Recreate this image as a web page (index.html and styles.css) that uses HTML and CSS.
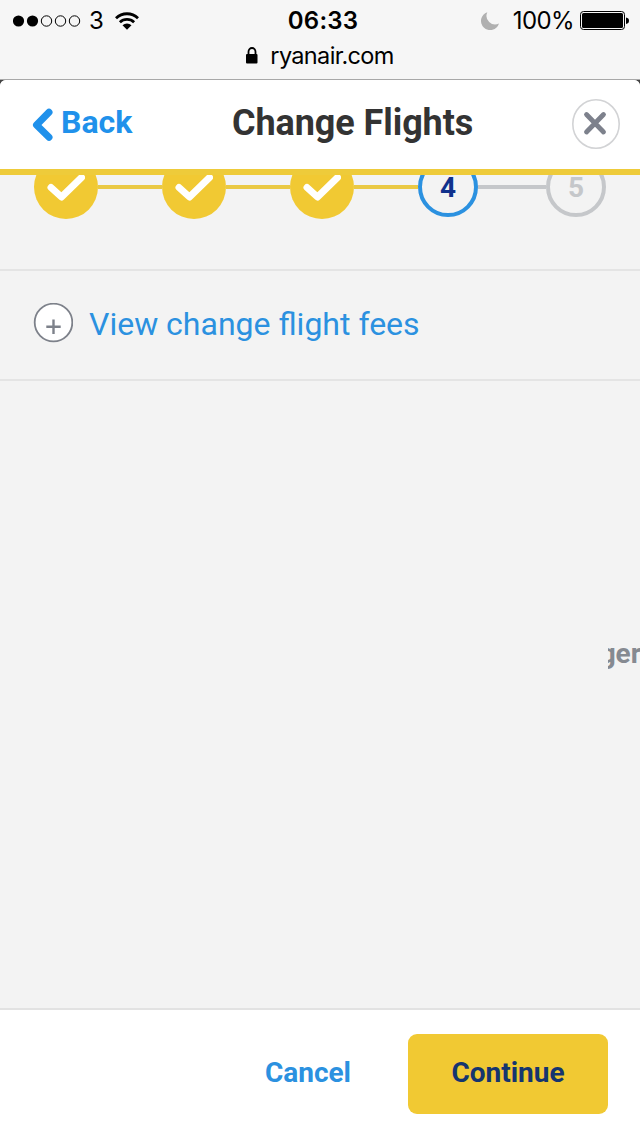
FILE: index.html
```html
<!DOCTYPE html>
<html lang="en">
<head>
<meta charset="utf-8">
<title>Change Flights</title>
<link rel="stylesheet" href="styles.css">
</head>
<body>
<div class="browser">
  <div class="status">
    <div class="status-left">
      <svg class="signal" width="68" height="12" viewBox="0 0 68 12"><g fill="#000"><circle cx="5.500" cy="6" r="5.600"/><circle cx="19.500" cy="6" r="5.600"/></g><g fill="none" stroke="#000" stroke-width="1"><circle cx="33.500" cy="6" r="5.200"/><circle cx="47.500" cy="6" r="5.200"/><circle cx="61.500" cy="6" r="5.200"/></g></svg>
      <span class="carrier">3</span>
      <svg width="24" height="18" viewBox="0 0 24 18"><g fill="none" stroke="#000" stroke-width="2.8"><path d="M1 6.2a15.8 15.8 0 0 1 22 0"/><path d="M4.9 10.2a10.2 10.2 0 0 1 14.2 0"/></g><path d="M7.5 13.2a6.7 6.7 0 0 1 9 0L12 17.8z"/></svg>
    </div>
    <span class="clock">06:33</span>
    <div class="status-right">
      <svg width="18" height="18" viewBox="0 0 18 18"><path fill="#b0b0b0" d="M6.3.2A9.2 9.2 0 1 0 18 11.600A8.700 8.700 0 0 1 6.300.2z"/></svg>
      <span class="percent">100%</span>
      <svg class="battery" width="49" height="20" viewBox="0 0 49 20"><rect x=".5" y=".5" width="44" height="18" rx="3" fill="none" stroke="#000"/><rect x="2" y="2" width="41" height="15" rx="1.500"/><path d="M46 6.500q3 .5 3 3.200t-3 3.300z"/></svg>
    </div>
  </div>
  <div class="address">
    <svg width="12" height="17" viewBox="0 0 12 17"><path fill="none" stroke="#000" stroke-width="1.800" d="M2.500 8V4.800a3.500 3.800 0 0 1 7 0V8"/><rect y="7" width="11.500" height="9.500" rx="1"/></svg>
    <span class="domain">ryanair.com</span>
  </div>
</div>
<div class="page">
  <header class="header">
    <a class="back"><svg width="22" height="34" viewBox="0 0 22 34"><path fill="none" stroke="#2091eb" stroke-width="7" stroke-linecap="round" stroke-linejoin="round" d="M17 4.200 4.500 17 17 29.200"/></svg><span class="back-label">Back</span></a>
    <h1 class="title">Change Flights</h1>
    <button class="close"><svg width="48" height="50" viewBox="0 0 48 50"><ellipse cx="24" cy="25" rx="23.200" ry="24.200" fill="#fff" stroke="#d2d3d5" stroke-width="1.600"/><path d="M14.500 15.500 31.500 33M31.500 15.500 14.500 33" fill="none" stroke="#7d818c" stroke-width="4.800" stroke-linecap="round"/></svg></button>
  </header>
  <div class="steps">
    <div class="step done"><svg width="38" height="28" viewBox="0 0 38 28"><path class="tick" d="M4 14.500 14.500 24 34.500 4.500"/></svg></div>
    <div class="link"></div>
    <div class="step done"><svg width="38" height="28" viewBox="0 0 38 28"><path class="tick" d="M4 14.500 14.500 24 34.500 4.500"/></svg></div>
    <div class="link"></div>
    <div class="step done"><svg width="38" height="28" viewBox="0 0 38 28"><path class="tick" d="M4 14.500 14.500 24 34.500 4.500"/></svg></div>
    <div class="link"></div>
    <div class="step current">4</div>
    <div class="link pending"></div>
    <div class="step upcoming">5</div>
  </div>
  <a class="fees">
    <svg class="plus" width="40" height="40" viewBox="0 0 40 40"><circle cx="20.500" cy="19.500" r="18.800" fill="#fff" stroke="#7d818a" stroke-width="1.800"/><path d="M20.500 16.500V31M13.300 23.700H27.700" stroke="#7d818a" stroke-width="2.400"/></svg>
    <span class="fees-label">View change flight fees</span>
  </a>
  <main class="content"><div class="slide"><span class="slide-label">ger</span></div></main>
  <footer class="footer">
    <span class="cancel">Cancel</span>
    <button class="continue"><span class="continue-label">Continue</span></button>
  </footer>
</div>
</body>
</html>
```
FILE: styles.css
```css
* { box-sizing: border-box; }
body { margin: 0; width: 640px; height: 1136px; overflow: hidden; background: #444; font-family: Roboto, sans-serif; display: flex; flex-direction: column; }
svg { display: block; flex: none; }
button { border: 0; padding: 0; background: none; font: inherit; }
span { white-space: nowrap; }
.browser { height: 80px; flex: none; background: #f6f6f6; border-bottom: 1px solid #a8a8a8; font-family: Inter, sans-serif; color: #000; }
.status { height: 41px; padding: 0 11px 0 13px; display: grid; grid-template-columns: 1fr auto 1fr; align-items: center; }
.status-left, .status-right { display: flex; align-items: center; }
.carrier { font-size: 24px; width: 16px; margin: 0 10px 0 8px; }
.clock { font-size: 24px; font-weight: 600; letter-spacing: 0.2px; padding-left: 4px; }
.status-right { justify-content: flex-end; }
.percent { font-size: 24px; letter-spacing: -0.6px; margin: 0 6px 0 14px; }
.battery { margin-top: 1px; }
.address { display: flex; align-items: center; justify-content: center; gap: 12px; height: 28px; }
.domain { font-size: 23.5px; letter-spacing: -0.65px; }
.page { flex: 1; display: flex; flex-direction: column; background: #f3f3f3; border-radius: 6px 6px 0 0; overflow: hidden; }
.header { height: 95px; flex: none; display: flex; align-items: center; padding: 0 20px 0 32px; background: #fff; border-bottom: 6px solid #eecb3a; }
.back { display: flex; align-items: center; gap: 7px; color: #2091eb; font-size: 32px; font-weight: 700; width: 200px; }
.back-label { margin-top: -5px; }
.title { margin: -4px auto 0 0; font-size: 36px; line-height: 42px; letter-spacing: -0.08px; font-weight: 700; color: #333; white-space: nowrap; }
.close { margin-top: -2px; }
.steps { height: 96px; flex: none; display: flex; align-items: flex-start; overflow: hidden; padding: 0 34px; border-bottom: 2px solid #e4e4e4; }
.step { flex: none; border-radius: 50%; margin-top: -20px; width: 64px; height: 64px; display: flex; align-items: center; justify-content: center; font-size: 28px; font-weight: 700; }
.done { background: #f1c933; }
.tick { fill: none; stroke: #fff; stroke-width: 7; stroke-linecap: round; stroke-linejoin: round; }
.current, .upcoming { width: 60px; height: 60px; margin-top: -18px; border: 4px solid #2b91e0; color: #10318c; }
.upcoming { border-color: #c5c7ca; color: #c5c7ca; }
.link { flex: none; width: 64px; height: 4px; margin-top: 10px; background: #eac944; }
.pending { width: 68px; background: #c5c7ca; }
.fees { height: 110px; flex: none; display: flex; align-items: center; padding: 0 33px 2px; gap: 16px; border-bottom: 2px solid #e4e4e4; color: #2b91e0; font-size: 32px; }
.plus { margin-top: -2px; }
.content { flex: 1; display: flex; justify-content: flex-end; align-items: center; }
.slide { width: 32px; overflow: hidden; display: flex; justify-content: flex-end; margin-top: -82px; }
.slide-label { font-size: 28px; font-weight: 700; color: #868a91; margin-right: -1px; }
.footer { height: 128px; flex: none; display: flex; align-items: center; justify-content: flex-end; gap: 57px; padding: 2px 32px 0 0; background: #fff; border-top: 2px solid #e2e2e2; font-size: 28px; font-weight: 700; }
.cancel { color: #2b91e0; margin-top: -4px; }
.continue { width: 200px; height: 80px; padding-bottom: 4px; border-radius: 9px; background: #f1c933; color: #15356f; }
```
